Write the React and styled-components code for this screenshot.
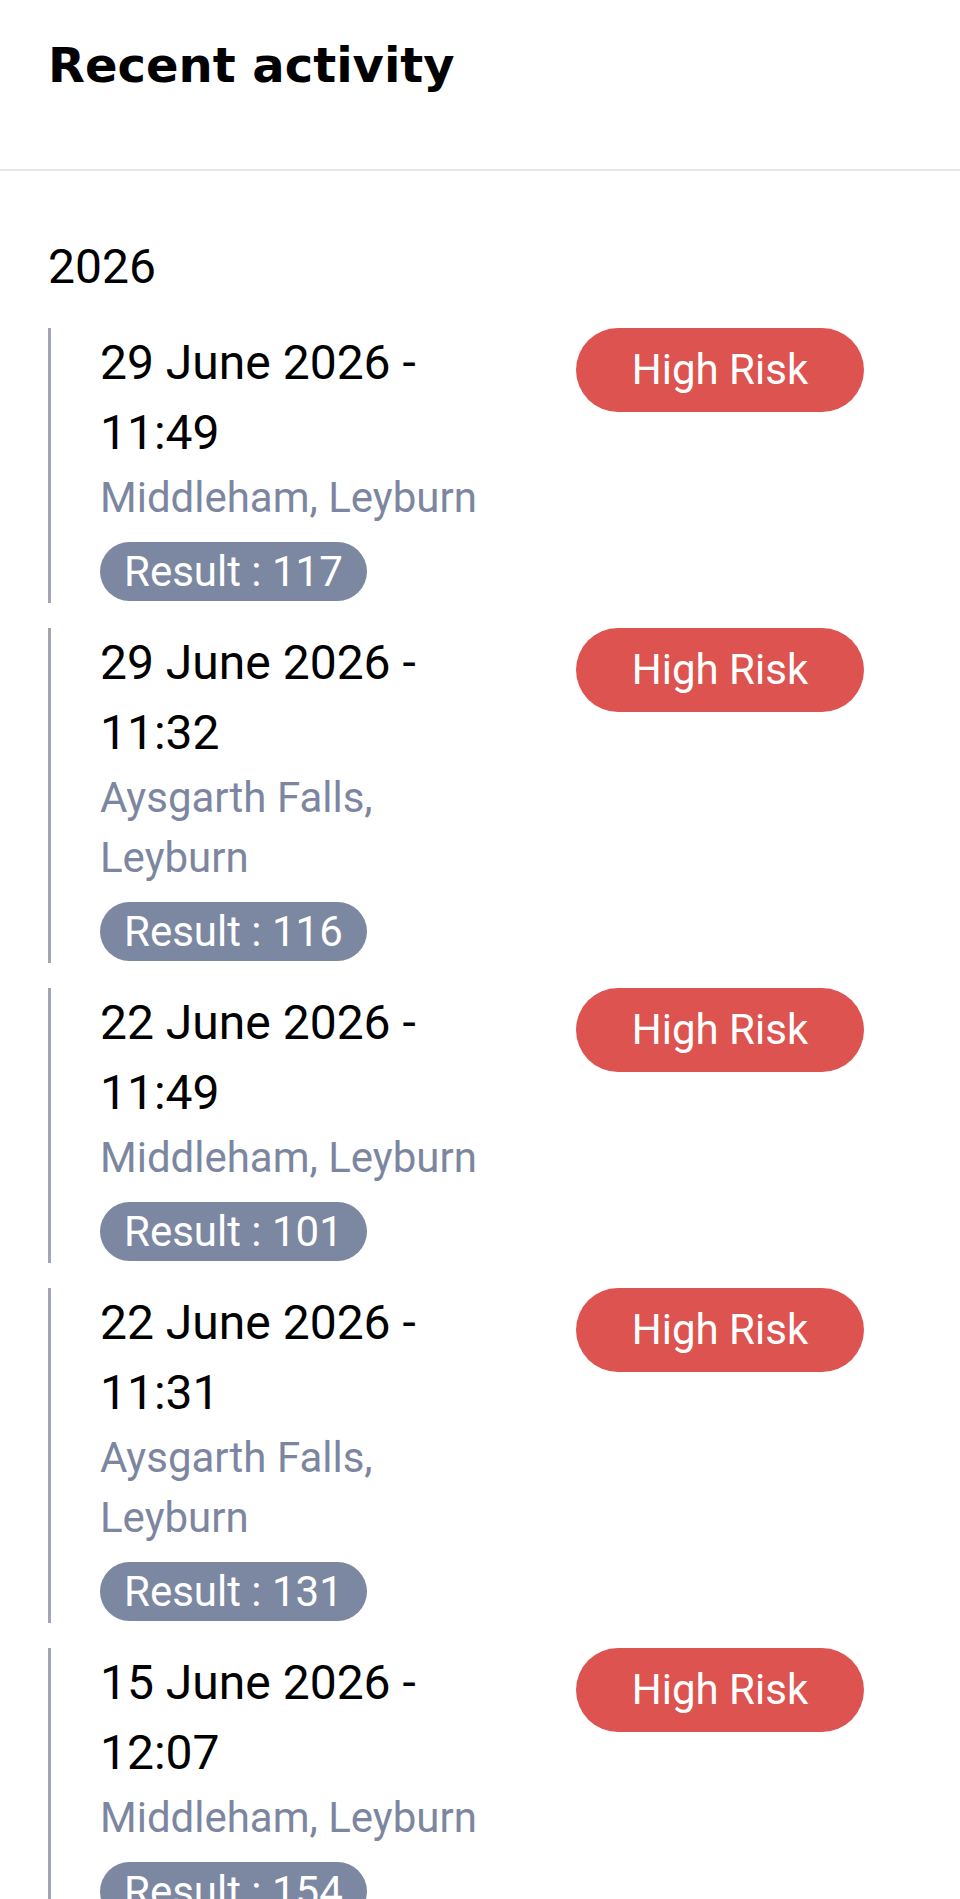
import styled, { createGlobalStyle } from "styled-components";

const GlobalStyle = createGlobalStyle`
  * {
    box-sizing: border-box;
  }

  body {
    margin: 0;
    background: #ffffff;
    font-family: "Roboto", sans-serif;
  }
`;

const Page = styled.div`
  width: 960px;
  background: #ffffff;
`;

const Header = styled.header`
  height: 171px;
  padding: 36px 48px 0;
  border-bottom: 2px solid #e6e6e6;
`;

const Titulo = styled.h1`
  margin: 0;
  color: #000000;

  font-family: "DejaVu Sans", sans-serif;
  font-size: 48px;
  font-weight: 700;
  line-height: 58px;
`;

const Secao = styled.section`
  padding: 60px 48px 0;
`;

const Ano = styled.h2`
  margin: 0 0 25px;
  color: #000000;

  font-family: "Roboto", sans-serif;
  font-size: 48px;
  font-weight: 400;
  line-height: 72px;
`;

const Lista = styled.div`
  display: flex;
  flex-direction: column;
  gap: 25px;
`;

const Item = styled.article`
  display: grid;
  grid-template-columns: 400px 1fr;
  column-gap: 28px;
  padding: 0 0 2px 49px;
  border-left: 3px solid #a2a5b3;
`;

const Detalhes = styled.div`
  display: flex;
  flex-direction: column;
  align-items: flex-start;
`;

const Data = styled.p`
  margin: 0;
  color: #000000;

  font-size: 48px;
  line-height: 70px;
`;

const Local = styled.p`
  margin: 0 0 14px;
  color: #7d86a0;

  font-size: 42px;
  line-height: 60px;
`;

const Resultado = styled.span`
  display: inline-flex;
  align-items: center;
  height: 59px;
  padding: 0 24px;
  border-radius: 30px;
  background: #7c87a2;
  color: #ffffff;

  font-size: 42px;
  line-height: 1;
  white-space: nowrap;
`;

const ColunaRisco = styled.div`
  display: flex;
  justify-content: center;
  align-items: flex-start;
`;

const Risco = styled.span`
  display: inline-flex;
  align-items: center;
  height: 84px;
  padding: 0 56px;
  border-radius: 42px;
  background: ${(props) => (props.$nivel === "alto" ? "#dd5350" : "#7c87a2")};
  color: #ffffff;

  font-size: 42px;
  line-height: 1;
  white-space: nowrap;
`;

const atividades = [
  { data: "29 June 2026 - 11:49", local: "Middleham, Leyburn", resultado: 117 },
  { data: "29 June 2026 - 11:32", local: "Aysgarth Falls, Leyburn", resultado: 116 },
  { data: "22 June 2026 - 11:49", local: "Middleham, Leyburn", resultado: 101 },
  { data: "22 June 2026 - 11:31", local: "Aysgarth Falls, Leyburn", resultado: 131 },
  { data: "15 June 2026 - 12:07", local: "Middleham, Leyburn", resultado: 154 },
];

const App = () => {
  return (
    <Page>
      <GlobalStyle />
      <Header>
        <Titulo>Recent activity</Titulo>
      </Header>

      <Secao>
        <Ano>2026</Ano>
        <Lista>
          {atividades.map((atividade) => (
            <Item key={atividade.data}>
              <Detalhes>
                <Data>{atividade.data}</Data>
                <Local>{atividade.local}</Local>
                <Resultado>Result : {atividade.resultado}</Resultado>
              </Detalhes>
              <ColunaRisco>
                <Risco $nivel="alto">High Risk</Risco>
              </ColunaRisco>
            </Item>
          ))}
        </Lista>
      </Secao>
    </Page>
  );
};

export default App;
